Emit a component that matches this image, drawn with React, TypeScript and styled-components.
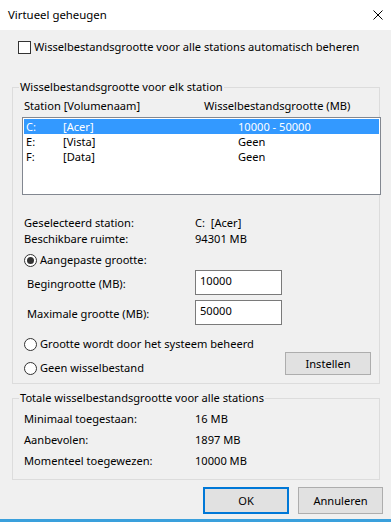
import styled, { createGlobalStyle } from "styled-components";

const GlobalStyle = createGlobalStyle`
  html, body {
    margin: 0;
    padding: 0;
  }
  body {
    background: #f0f0f0;
    font-family: "Noto Sans", "Open Sans", sans-serif;
    font-size: 11.1px;
    color: #000;
  }
`;

const drives = [
  { letter: "C:", name: "[Acer]", size: "10000 - 50000", selected: true },
  { letter: "E:", name: "[Vista]", size: "Geen", selected: false },
  { letter: "F:", name: "[Data]", size: "Geen", selected: false },
];

const totals = [
  ["Minimaal toegestaan:", "16 MB"],
  ["Aanbevolen:", "1897 MB"],
  ["Momenteel toegewezen:", "10000 MB"],
];

export default function App() {
  return (
    <>
      <GlobalStyle />
      <Window>
        <TitleBar>
          <span>Virtueel geheugen</span>
          <CloseIcon viewBox="0 0 10 10">
            <path d="M0.5 0.5 L9.5 9.5 M9.5 0.5 L0.5 9.5" stroke="#000" strokeWidth="1" />
          </CloseIcon>
        </TitleBar>

        <Body>
          <CheckRow>
            <CheckBox />
            <span>Wisselbestandsgrootte voor alle stations automatisch beheren</span>
          </CheckRow>

          <Group $top={24}>
            <Legend>Wisselbestandsgrootte voor elk station</Legend>
            <GroupContent $bottom={7}>
              <ListHeader>
                <span>Station [Volumenaam]</span>
                <span>Wisselbestandsgrootte (MB)</span>
              </ListHeader>
              <DriveList>
                {drives.map(d => (
                  <DriveRow key={d.letter} $selected={d.selected}>
                    <span>{d.letter}</span>
                    <span>{d.name}</span>
                    <span>{d.size}</span>
                  </DriveRow>
                ))}
              </DriveList>

              <InfoGrid>
                <span>Geselecteerd station:</span>
                <span>C:&nbsp; [Acer]</span>
                <span>Beschikbare ruimte:</span>
                <span>94301 MB</span>
              </InfoGrid>

              <RadioRow $top={5}>
                <Radio $checked />
                <span>Aangepaste grootte:</span>
              </RadioRow>

              <FieldRow $top={2}>
                <FieldLabel>Begingrootte (MB):</FieldLabel>
                <TextBox>10000</TextBox>
              </FieldRow>
              <FieldRow $top={5}>
                <FieldLabel>Maximale grootte (MB):</FieldLabel>
                <TextBox>50000</TextBox>
              </FieldRow>

              <RadioRow $top={11}>
                <Radio />
                <span>Grootte wordt door het systeem beheerd</span>
              </RadioRow>
              <LastRow>
                <RadioRow $top={0}>
                  <Radio />
                  <span>Geen wisselbestand</span>
                </RadioRow>
                <SetButton>Instellen</SetButton>
              </LastRow>
            </GroupContent>
          </Group>

          <Group $top={6}>
            <Legend>Totale wisselbestandsgrootte voor alle stations</Legend>
            <GroupContent $bottom={8}>
              <TotalsGrid>
                {totals.map(([label, value]) => (
                  <TotalRow key={label}>
                    <span>{label}</span>
                    <span>{value}</span>
                  </TotalRow>
                ))}
              </TotalsGrid>
            </GroupContent>
          </Group>

          <Footer>
            <DialogButton $default>OK</DialogButton>
            <DialogButton>Annuleren</DialogButton>
          </Footer>
        </Body>
      </Window>
    </>
  );
}

const Window = styled.div`
  width: 391px;
  height: 522px;
  box-sizing: border-box;
  display: flex;
  flex-direction: column;
  background: #f0f0f0;
  border-bottom: 3px solid #3aa0dc;
  overflow: hidden;
`;

const TitleBar = styled.header`
  flex: none;
  height: 30px;
  padding: 0 8px;
  display: flex;
  align-items: center;
  justify-content: space-between;
  background: #fff;
  font-size: 11.4px;
  line-height: 16px;
`;

const CloseIcon = styled.svg`
  width: 10px;
  height: 10px;
  display: block;
`;

const Body = styled.main`
  flex: 1;
  display: flex;
  flex-direction: column;
  padding-top: 9px;
  line-height: 16px;
`;

const CheckRow = styled.label`
  height: 16px;
  padding-left: 18px;
  display: flex;
  align-items: center;
  gap: 3px;
`;

const CheckBox = styled.span`
  width: 13px;
  height: 13px;
  box-sizing: border-box;
  border: 1px solid #333;
  background: #fff;
`;

const Group = styled.fieldset<{ $top: number }>`
  margin: ${p => p.$top}px 11px 0 12px;
  padding: 0;
  min-width: 0;
  border: 1px solid #dcdcdc;
`;

const Legend = styled.legend`
  margin-left: 6px;
  padding: 0 1px;
  line-height: 16px;
`;

const GroupContent = styled.div<{ $bottom: number }>`
  display: flex;
  flex-direction: column;
  padding-bottom: ${p => p.$bottom}px;
`;

const ListHeader = styled.div`
  margin-top: 3px;
  padding-left: 11px;
  display: grid;
  grid-template-columns: 180px 1fr;
`;

const DriveList = styled.div`
  margin: 3px 0 0 9px;
  width: 359px;
  height: 78px;
  box-sizing: border-box;
  padding: 1px;
  border: 1px solid #828790;
  background: #fff;
`;

const DriveRow = styled.div<{ $selected?: boolean }>`
  height: 15px;
  line-height: 15px;
  padding-left: 2px;
  display: grid;
  grid-template-columns: 37px 175px 1fr;
  background: ${p => (p.$selected ? "#3399ff" : "transparent")};
  color: ${p => (p.$selected ? "#fff" : "#000")};
`;

const InfoGrid = styled.div`
  margin-top: 20px;
  padding-left: 11px;
  display: grid;
  grid-template-columns: 171px 1fr;
`;

const RadioRow = styled.label<{ $top: number }>`
  margin-top: ${p => p.$top}px;
  height: 16px;
  padding-left: 11px;
  display: flex;
  align-items: center;
  gap: 3px;
`;

const Radio = styled.span<{ $checked?: boolean }>`
  width: 13px;
  height: 13px;
  box-sizing: border-box;
  border: 1px solid #333;
  border-radius: 50%;
  background: #fff;
  display: flex;
  align-items: center;
  justify-content: center;

  &::after {
    content: "";
    width: 7px;
    height: 7px;
    border-radius: 50%;
    background: #333;
    display: ${p => (p.$checked ? "block" : "none")};
  }
`;

const FieldRow = styled.div<{ $top: number }>`
  margin-top: ${p => p.$top}px;
  padding-left: 14px;
  display: flex;
  align-items: center;
`;

const FieldLabel = styled.span`
  width: 168px;
  padding-top: 3px;
`;

const TextBox = styled.div`
  width: 87px;
  height: 25px;
  box-sizing: border-box;
  padding: 2px 4px;
  border: 1px solid #7a7a7a;
  background: #fff;
`;

const LastRow = styled.div`
  height: 24px;
  padding-right: 8px;
  display: flex;
  align-items: flex-start;
  justify-content: space-between;

  & > label {
    align-self: flex-end;
  }
`;

const SetButton = styled.button`
  width: 86px;
  height: 23px;
  padding: 0;
  font: inherit;
  color: #000;
  background: #e1e1e1;
  border: 1px solid #adadad;
`;

const TotalsGrid = styled.div`
  margin-top: 2px;
  padding-left: 11px;
  display: flex;
  flex-direction: column;
`;

const TotalRow = styled.div`
  height: 21px;
  line-height: 21px;
  display: grid;
  grid-template-columns: 171px 1fr;
`;

const Footer = styled.footer`
  margin-top: 7px;
  padding-right: 8px;
  display: flex;
  justify-content: flex-end;
  gap: 9px;
`;

const DialogButton = styled.button<{ $default?: boolean }>`
  width: ${p => (p.$default ? 86 : 85)}px;
  height: 27px;
  padding: 0;
  font: inherit;
  color: #000;
  background: #e1e1e1;
  border: ${p => (p.$default ? "2px solid #0078d7" : "1px solid #adadad")};
`;
